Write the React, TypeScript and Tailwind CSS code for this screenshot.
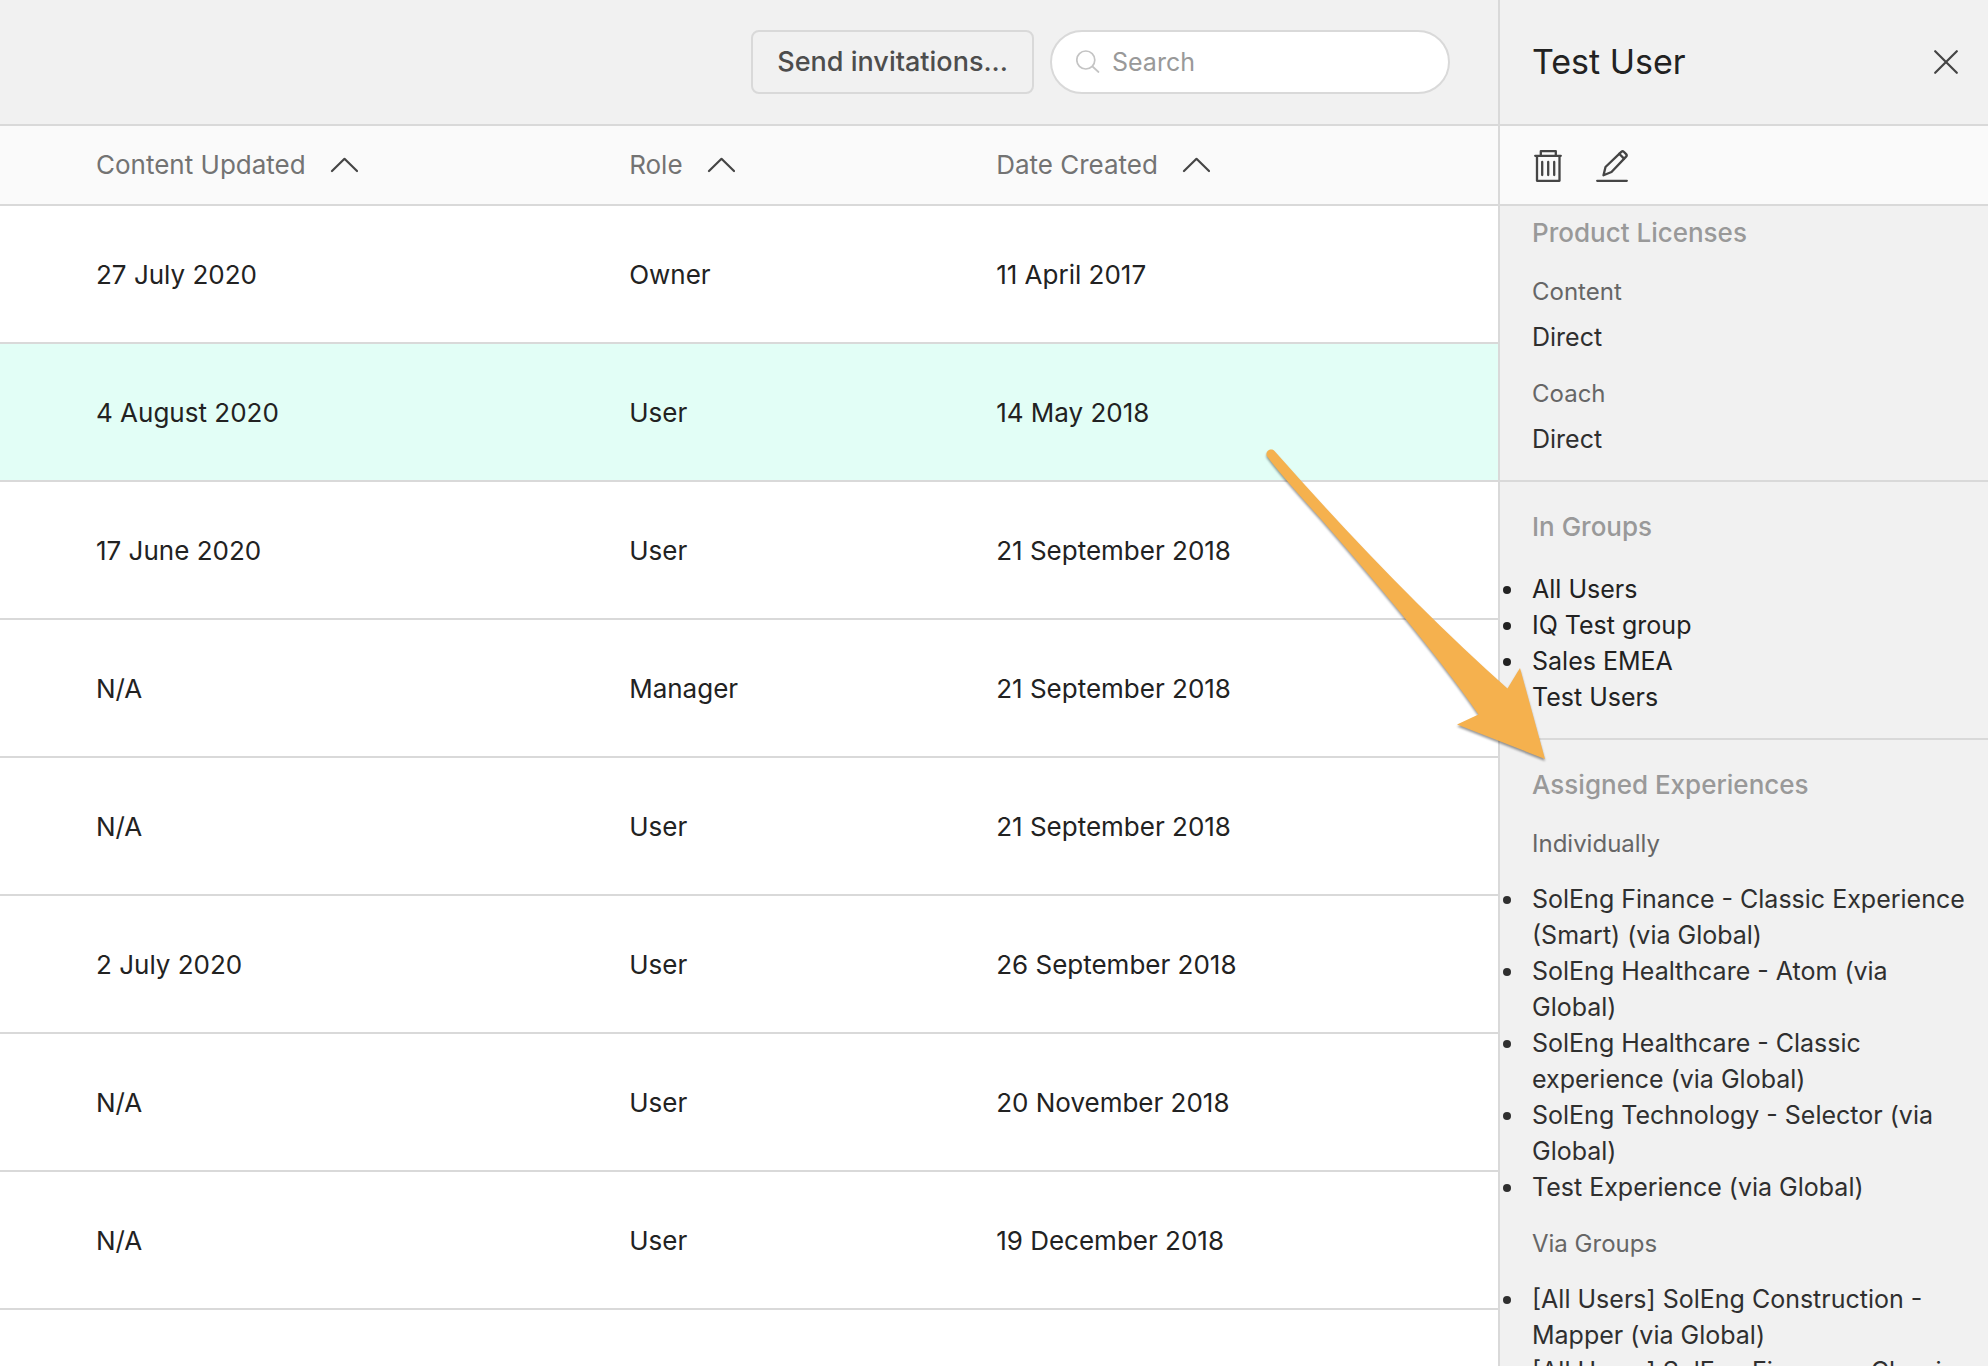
type SortableColumn = { label: string; width: string };

type Row = { updated: string; role: string; created: string; selected?: boolean };

const COLUMNS: SortableColumn[] = [
  { label: "Content Updated", width: "w-[42%] pl-24" },
  { label: "Role", width: "w-[24.5%]" },
  { label: "Date Created", width: "" },
];

const ROWS: Row[] = [
  { updated: "27 July 2020", role: "Owner", created: "11 April 2017" },
  { updated: "4 August 2020", role: "User", created: "14 May 2018", selected: true },
  { updated: "17 June 2020", role: "User", created: "21 September 2018" },
  { updated: "N/A", role: "Manager", created: "21 September 2018" },
  { updated: "N/A", role: "User", created: "21 September 2018" },
  { updated: "2 July 2020", role: "User", created: "26 September 2018" },
  { updated: "N/A", role: "User", created: "20 November 2018" },
  { updated: "N/A", role: "User", created: "19 December 2018" },
];

const GROUPS = ["All Users", "IQ Test group", "Sales EMEA", "Test Users"];

const INDIVIDUAL = [
  "SolEng Finance - Classic Experience (Smart) (via Global)",
  "SolEng Healthcare - Atom (via Global)",
  "SolEng Healthcare - Classic experience (via Global)",
  "SolEng Technology - Selector (via Global)",
  "Test Experience (via Global)",
];

const VIA_GROUPS = [
  "[All Users] SolEng Construction - Mapper (via Global)",
  "[All Users] SolEng Finance - Classic Experience (Smart) (via Global)",
];

function ChevronUp() {
  return (
    <svg aria-hidden className="h-4 w-7" viewBox="0 0 28 16" fill="none" stroke="#454545" strokeWidth="2.2" strokeLinecap="round" strokeLinejoin="round">
      <path d="M2 14 14.500 1.800 27 14" />
    </svg>
  );
}

function SearchIcon() {
  return (
    <svg aria-hidden className="h-6 w-6 shrink-0" viewBox="0 0 24 24" fill="none" stroke="#c4c4c4" strokeWidth="1.7" strokeLinecap="round">
      <circle cx="9.8" cy="10" r="9" />
      <path d="m16.500 16.500 6 5.500" />
    </svg>
  );
}

function CloseIcon() {
  return (
    <svg aria-hidden className="h-6 w-6" viewBox="0 0 24 24" fill="none" stroke="#454545" strokeWidth="2.2" strokeLinecap="round">
      <path d="m1.200 1.200 21.600 21.600M22.800 1.200 1.200 22.800" />
    </svg>
  );
}

function TrashIcon() {
  return (
    <svg aria-hidden className="h-8 w-7" viewBox="0 0 28 32" fill="none" stroke="#454545" strokeWidth="2.3" strokeLinecap="round" strokeLinejoin="round">
      <path d="M1.200 5.800h25.600M6.800 5.500V1.200h15v4.300M3 6v24.800h22.500V6" />
      <path d="M8.200 12v13M14.200 12v13M20.200 12v13" />
    </svg>
  );
}

function EditIcon() {
  return (
    <svg aria-hidden className="h-8 w-8" viewBox="0 0 32 32" fill="none" stroke="#454545" strokeWidth="2.3" strokeLinecap="round" strokeLinejoin="round">
      <path d="M1.200 30.800h29.600" />
      <path d="M7.500 25.300 9.500 17 25.300 1.800q1.300-1 2.500 0l2.300 2.300q1.200 1.300 0 2.500L15.500 22z" />
      <path d="m23.200 3.800 4.800 4.800" />
    </svg>
  );
}

/** Orange pointer that leads from the selected row to the experiences section. */
function PointerArrow() {
  return (
    <svg
      aria-hidden
      className="pointer-events-none absolute top-[440px] -left-[240px] z-10 h-[330px] w-[290px] drop-shadow-[0_2px_1px_rgba(0,0,0,0.4)]"
      viewBox="0 0 290 330"
      fill="#f5b14e"
    >
      <path d="M14.500 11C11 7.500 5 11 6.800 16Q20 34 60 78Q170 204 218.500 274.500L197 284.500L285 319L260 228L247.500 248.500Q140 153 14.500 11z" />
    </svg>
  );
}

function BulletList({ items }: { items: string[] }) {
  return (
    <ul className="-ml-1.5 list-disc">
      {items.map((item) => (
        <li key={item} className="pl-1.5">
          {item}
        </li>
      ))}
    </ul>
  );
}

export default function App() {
  return (
    <div className="flex h-screen overflow-hidden bg-white font-['Inter','Liberation_Sans',sans-serif] text-[25px] leading-9 text-[#222]">
      <main className="min-w-0 flex-1">
        <header className="flex h-[126px] items-center justify-end gap-4 border-b-2 border-[#d9d9d9] bg-[#f1f1f1] pr-12">
          <button type="button" className="h-16 rounded-lg border-2 border-[#d9d9d9] px-6 text-[27px] font-medium text-[#4d4d4d]">
            Send invitations...
          </button>
          <label className="flex h-16 w-[400px] items-center gap-3 rounded-full border-2 border-[#d9d9d9] bg-white pr-6 pl-6">
            <SearchIcon />
            <input
              type="text"
              aria-label="Search"
              placeholder="Search"
              className="min-w-0 flex-1 bg-transparent outline-none placeholder:text-[#999]"
            />
          </label>
        </header>

        <table className="w-full table-fixed border-separate border-spacing-0 text-left text-[26px]">
          <thead>
            <tr className="bg-[#fafafa] text-[#737373]">
              {COLUMNS.map((col) => (
                <th key={col.label} scope="col" className={`h-20 border-b-2 border-[#d9d9d9] p-0 font-normal ${col.width}`}>
                  <button type="button" className="flex items-center gap-6">
                    {col.label}
                    <ChevronUp />
                  </button>
                </th>
              ))}
            </tr>
          </thead>
          <tbody>
            {ROWS.map((row, i) => (
              <tr key={i} className={row.selected ? "bg-[#e2fef6]" : "bg-white"}>
                <td className="h-[138px] border-b-2 border-[#d9d9d9] p-0 pt-0.5 pl-24">{row.updated}</td>
                <td className="border-b-2 border-[#d9d9d9] p-0 pt-0.5">{row.role}</td>
                <td className="border-b-2 border-[#d9d9d9] p-0 pt-0.5">{row.created}</td>
              </tr>
            ))}
          </tbody>
        </table>
      </main>

      <aside className="relative flex w-[490px] shrink-0 flex-col border-l-2 border-[#d9d9d9] bg-[#f1f1f1]">
        <header className="flex h-[126px] shrink-0 items-center justify-between border-b-2 border-[#d9d9d9] pr-[30px] pl-8">
          <h1 className="text-[34px] leading-10">Test User</h1>
          <button type="button" aria-label="Close">
            <CloseIcon />
          </button>
        </header>

        <div className="flex h-20 shrink-0 items-center gap-[34px] border-b-2 border-[#d9d9d9] bg-[#fafafa] px-[34px] pt-0.5">
          <button type="button" aria-label="Delete user">
            <TrashIcon />
          </button>
          <button type="button" aria-label="Edit user">
            <EditIcon />
          </button>
        </div>

        <div className="min-h-0 flex-1 overflow-hidden">
          <section className="border-b-2 border-[#d9d9d9] pt-[9px] pr-3 pb-[23px] pl-8">
            <h2 className="text-[26px] font-medium text-[#999]">Product Licenses</h2>
            <dl className="text-[#2f2f2f]">
              <dt className="mt-[23px] text-2xl leading-9 text-[#666]">Content</dt>
              <dd className="mt-[9px]">Direct</dd>
              <dt className="mt-[21px] text-2xl leading-9 text-[#666]">Coach</dt>
              <dd className="mt-[9px]">Direct</dd>
            </dl>
          </section>

          <section className="border-b-2 border-[#d9d9d9] pt-[27px] pr-3 pb-[23px] pl-8">
            <h2 className="mb-[26px] text-[26px] font-medium text-[#999]">In Groups</h2>
            <BulletList items={GROUPS} />
          </section>

          <section className="pt-[27px] pr-3 pb-[23px] pl-8 text-[#2f2f2f]">
            <h2 className="text-[26px] font-medium text-[#999]">Assigned Experiences</h2>
            <h3 className="mt-[23px] mb-[19px] text-2xl leading-9 text-[#666]">Individually</h3>
            <BulletList items={INDIVIDUAL} />
            <h3 className="mt-[21px] mb-[19px] text-2xl leading-9 text-[#666]">Via Groups</h3>
            <BulletList items={VIA_GROUPS} />
          </section>
        </div>

        <PointerArrow />
      </aside>
    </div>
  );
}
